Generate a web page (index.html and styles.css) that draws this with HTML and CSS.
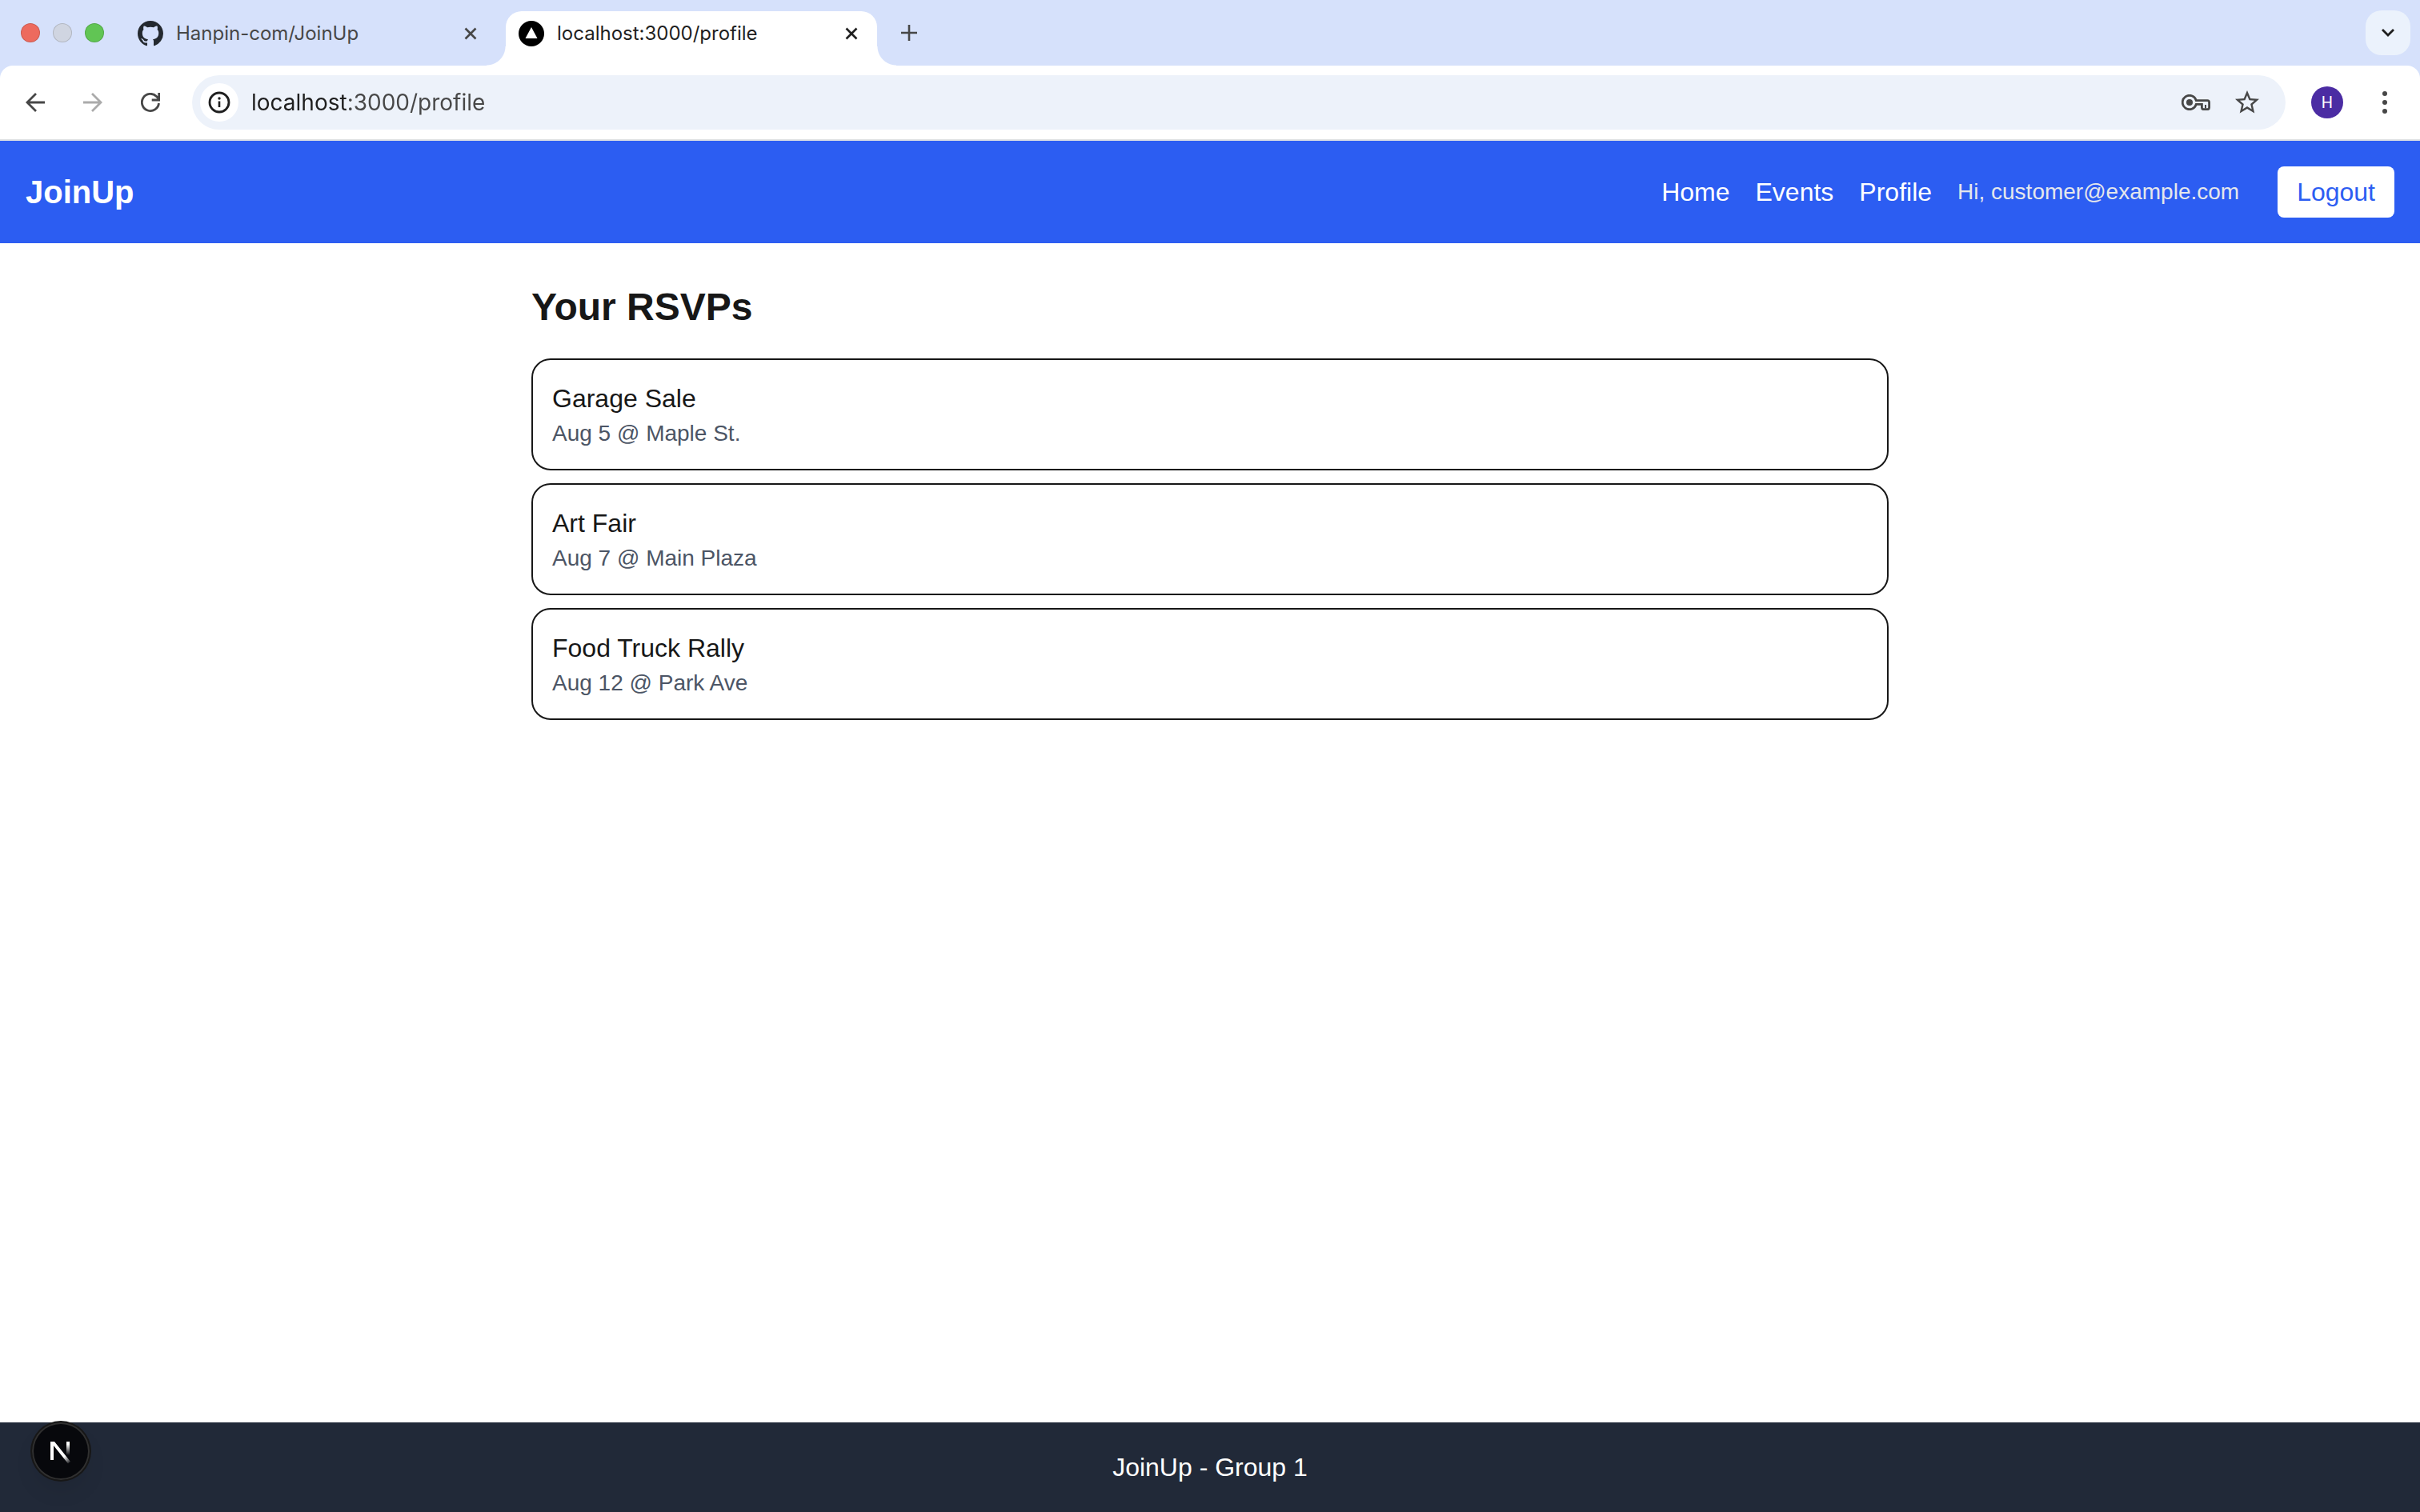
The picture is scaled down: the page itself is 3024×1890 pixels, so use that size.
FILE: index.html
```html
<!DOCTYPE html>
<html lang="en">
<head>
<meta charset="utf-8">
<meta name="viewport" content="width=device-width, initial-scale=1">
<title>JoinUp</title>
<link rel="stylesheet" href="styles.css">
</head>
<body>
<div class="browser">
  <div class="tab-strip">
    <div class="lights">
      <span class="light light-close"></span>
      <span class="light light-min"></span>
      <span class="light light-max"></span>
    </div>
    <div class="tab">
      <svg class="favicon" viewBox="0 0 16 16" aria-hidden="true"><path fill="#24292f" d="M8 0C3.58 0 0 3.58 0 8c0 3.54 2.29 6.53 5.47 7.59.4.07.55-.17.55-.38 0-.19-.01-.82-.01-1.49-2.01.37-2.53-.49-2.69-.94-.09-.23-.48-.94-.82-1.13-.28-.15-.68-.52-.01-.53.63-.01 1.08.58 1.23.82.72 1.21 1.87.87 2.33.66.07-.52.28-.87.51-1.07-1.78-.2-3.64-.89-3.64-3.95 0-.87.31-1.59.82-2.15-.08-.2-.36-1.02.08-2.12 0 0 .67-.21 2.2.82.64-.18 1.32-.27 2-.27s1.36.09 2 .27c1.53-1.04 2.2-.82 2.2-.82.44 1.1.16 1.92.08 2.12.51.56.82 1.27.82 2.15 0 3.07-1.87 3.75-3.65 3.95.29.25.54.73.54 1.48 0 1.07-.01 1.93-.01 2.2 0 .21.15.46.55.38A8.01 8.01 0 0 0 16 8c0-4.42-3.58-8-8-8z"/></svg>
      <span class="tab-title">Hanpin-com/JoinUp</span>
      <button class="tab-close" aria-label="Close tab"><svg viewBox="0 0 16 16" width="16" height="16"><path d="M1.500 1.500l13 13M14.500 1.500l-13 13" stroke="currentColor" stroke-width="2.600" fill="none"/></svg></button>
    </div>
    <div class="tab tab-active">
      <svg class="favicon" viewBox="0 0 32 32" aria-hidden="true"><circle cx="16" cy="16" r="16"/><path d="M16 8l7.500 14h-15z" fill="#fff"/></svg>
      <span class="tab-title">localhost:3000/profile</span>
      <button class="tab-close" aria-label="Close tab"><svg viewBox="0 0 16 16" width="16" height="16"><path d="M1.500 1.500l13 13M14.500 1.500l-13 13" stroke="currentColor" stroke-width="2.600" fill="none"/></svg></button>
    </div>
    <button class="icon-button" aria-label="New tab"><svg viewBox="0 0 20 20" width="20" height="20"><path d="M10 0v20M0 10h20" stroke="currentColor" stroke-width="2.600" fill="none"/></svg></button>
    <button class="icon-button tab-search" aria-label="Search tabs"><svg viewBox="0 0 16 10" width="16" height="10"><path d="M1 1l7 7 7-7" stroke="currentColor" stroke-width="2.800" fill="none"/></svg></button>
  </div>
  <div class="toolbar">
    <div class="history">
      <button class="icon-button" aria-label="Back"><svg viewBox="0 0 24 24" width="24" height="24"><path d="M24 12H2M13 1L2 12l11 11" stroke="currentColor" stroke-width="2.800" fill="none"/></svg></button>
      <button class="icon-button" aria-label="Forward" disabled><svg viewBox="0 0 24 24" width="24" height="24"><path d="M0 12h22M11 1l11 11-11 11" stroke="currentColor" stroke-width="2.800" fill="none"/></svg></button>
      <button class="icon-button" aria-label="Reload"><svg viewBox="0 0 24 24" width="24" height="24"><path d="M22.500 13A10.600 10.600 0 1 1 19.500 4.500L23 8M22.700 0v9h-9" stroke="currentColor" stroke-width="2.800" fill="none"/></svg></button>
    </div>
    <div class="omnibox">
      <button class="site-info" aria-label="View site information"><svg viewBox="0 0 28 28" width="28" height="28"><circle cx="14" cy="14" r="12" stroke="currentColor" stroke-width="2.800" fill="none"/><path d="M14 12.500v7.500" stroke="currentColor" stroke-width="2.600"/><circle cx="14" cy="9" r="1.700" fill="currentColor"/></svg></button>
      <input class="address" type="text" aria-label="Address" value="localhost:3000/profile">
      <div class="omnibox-actions">
        <button class="icon-button" aria-label="Passwords"><svg viewBox="0 0 36 20" width="36" height="20"><path d="M18.300 7.600A8.700 8.700 0 1 0 18.300 12.400H25.400V16.500q0 2.200 2.200 2.200h4.800q2.200 0 2.200-2.200V9.800q0-2.200-2.200-2.200z" fill="none" stroke="currentColor" stroke-width="2.800"/><circle cx="10" cy="10" r="4" fill="currentColor"/><path d="M30 13v4.500" stroke="currentColor" stroke-width="2"/></svg></button>
        <button class="icon-button" aria-label="Bookmark this tab"><svg viewBox="0 0 24 24" width="36" height="36"><path fill="currentColor" d="M22 9.240l-7.190-.62L12 2 9.190 8.630 2 9.240l5.460 4.730L5.820 21 12 17.270 18.180 21l-1.630-7.030L22 9.240zM12 15.400l-3.760 2.270 1-4.280-3.320-2.880 4.380-.38L12 6.100l1.710 4.040 4.380.38-3.320 2.880 1 4.280L12 15.400z"/></svg></button>
      </div>
    </div>
    <div class="account">
      <button class="avatar" aria-label="Profile H">H</button>
      <button class="icon-button" aria-label="Menu"><svg viewBox="0 0 6 28" width="6" height="28"><g fill="currentColor"><circle cx="3" cy="3" r="3"/><circle cx="3" cy="14" r="3"/><circle cx="3" cy="25" r="3"/></g></svg></button>
    </div>
  </div>
</div>

<div class="page">
  <header class="site-header">
    <a class="brand" href="#">JoinUp</a>
    <nav class="site-nav">
      <a href="#">Home</a>
      <a href="#">Events</a>
      <a href="#">Profile</a>
      <span class="greeting">Hi, customer@example.com</span>
      <button class="logout">Logout</button>
    </nav>
  </header>
  <main class="content">
    <h1>Your RSVPs</h1>
    <ul class="rsvps">
      <li class="rsvp"><h2>Garage Sale</h2><p>Aug 5 @ Maple St.</p></li>
      <li class="rsvp"><h2>Art Fair</h2><p>Aug 7 @ Main Plaza</p></li>
      <li class="rsvp"><h2>Food Truck Rally</h2><p>Aug 12 @ Park Ave</p></li>
    </ul>
  </main>
  <footer class="site-footer">JoinUp - Group 1</footer>
</div>

<button class="dev-badge" aria-label="Open Next.js Dev Tools">
  <svg viewBox="0 -4 26 34" width="26" height="34">
    <defs>
      <linearGradient id="diagonal" gradientUnits="userSpaceOnUse" x1="14" y1="16" x2="24" y2="29"><stop offset="0.300" stop-color="#fff"/><stop offset="1" stop-color="#fff" stop-opacity="0"/></linearGradient>
      <linearGradient id="stem" gradientUnits="userSpaceOnUse" x1="0" y1="1" x2="0" y2="18"><stop offset="0.200" stop-color="#fff"/><stop offset="1" stop-color="#fff" stop-opacity="0"/></linearGradient>
    </defs>
    <path d="M0 24V1h5l20 25-3 2.500L4 6v18z" fill="url(#diagonal)"/>
    <path d="M20 1h4v17h-4z" fill="url(#stem)"/>
  </svg>
</button>
</body>
</html>
```
FILE: styles.css
```css
* {
  box-sizing: border-box;
  margin: 0;
  padding: 0;
}

body {
  display: flex;
  flex-direction: column;
  min-height: 100vh;
  background: #fff;
  color: #171717;
  font: 32px/48px "Liberation Sans", Arial, Helvetica, sans-serif;
}

button {
  border: 0;
  background: none;
  color: inherit;
  font: inherit;
}

a {
  color: inherit;
  text-decoration: none;
}

svg {
  display: block;
  flex: none;
}

/* Browser window */

.browser {
  background: #d6e1fb;
  color: #474747;
  font: 24px/32px Inter, "Noto Sans", sans-serif;
}

.tab-strip {
  display: flex;
  align-items: center;
  gap: 12px;
  height: 82px;
  padding: 0 12px 0 26px;
}

.lights {
  display: flex;
  gap: 16px;
  margin-right: 14px;
}

.light {
  width: 24px;
  height: 24px;
  border: 1px solid rgb(0 0 0 / 14%);
  border-radius: 50%;
}

.light-close { background: #ed6a5e; }
.light-min { background: #d0d5e1; }
.light-max { background: #61c554; }

.tab {
  position: relative;
  display: flex;
  align-items: center;
  gap: 16px;
  width: 464px;
  height: 68px;
  align-self: flex-end;
  padding: 0 24px 12px 16px;
}

.tab-active {
  border-radius: 20px 20px 0 0;
  background: #fff;
  color: #1f1f1f;
}

.tab-active::before,
.tab-active::after {
  content: "";
  position: absolute;
  bottom: 0;
  width: 24px;
  height: 24px;
}

.tab-active::before {
  right: 100%;
  background: radial-gradient(circle at 0 0, transparent 23px, #fff 24px);
}

.tab-active::after {
  left: 100%;
  background: radial-gradient(circle at 100% 0, transparent 23px, #fff 24px);
}

.favicon {
  width: 32px;
  height: 32px;
}

.tab-title {
  flex: 1;
  white-space: nowrap;
}

.icon-button {
  display: grid;
  place-items: center;
  flex: none;
  width: 56px;
  height: 56px;
}

.icon-button:disabled {
  color: #ababab;
}

.tab-search {
  margin-left: auto;
  border-radius: 20px;
  background: #ebf2fc;
  color: #1f1f1f;
}

.toolbar {
  display: flex;
  align-items: center;
  gap: 24px;
  padding: 12px 16px;
  border-bottom: 2px solid #dfe1e3;
  border-radius: 16px 16px 0 0;
  background: #fff;
}

.history {
  display: flex;
  gap: 16px;
}

.omnibox {
  display: flex;
  flex: 1;
  align-items: center;
  gap: 16px;
  height: 68px;
  padding: 0 20px 0 10px;
  border-radius: 34px;
  background: #edf2fa;
}

.site-info {
  display: grid;
  place-items: center;
  width: 48px;
  height: 48px;
  border-radius: 50%;
  background: #fff;
  color: #1f1f1f;
}

/* The host is drawn darker than the rest of the address. */
.address {
  flex: 1;
  height: 48px;
  border: 0;
  outline: 0;
  background: linear-gradient(90deg, #1f1f1f 120px, #474747 120px);
  -webkit-background-clip: text;
  background-clip: text;
  color: transparent;
  font: 28px/48px Inter, "Noto Sans", sans-serif;
}

.omnibox-actions {
  display: flex;
  gap: 8px;
}

.account {
  display: flex;
  align-items: center;
  gap: 24px;
  padding-left: 8px;
}

.avatar {
  width: 40px;
  height: 40px;
  border-radius: 50%;
  background: #4b2ca3;
  color: #fff;
  font: 20px/40px Roboto, sans-serif;
}

/* JoinUp page */

.page {
  display: flex;
  flex: 1;
  flex-direction: column;
}

.site-header {
  display: flex;
  align-items: center;
  justify-content: space-between;
  padding: 32px;
  background: #2c5df2;
  color: #fff;
}

.brand {
  font-size: 40px;
  font-weight: 700;
}

.site-nav {
  display: flex;
  align-items: center;
  gap: 32px;
}

.greeting {
  color: #e5e7eb;
  font-size: 28px;
}

.logout {
  margin-left: 16px;
  padding: 8px 24px;
  border-radius: 8px;
  background: #fff;
  color: #2c5df2;
}

.content {
  flex: 1;
  width: 100%;
  max-width: 1792px;
  margin: 0 auto;
  padding: 48px;
}

h1 {
  margin-bottom: 32px;
  font-size: 48px;
  line-height: 64px;
}

.rsvps {
  display: grid;
  gap: 16px;
  list-style: none;
}

.rsvp {
  padding: 24px;
  border: 2px solid #171717;
  border-radius: 24px;
}

.rsvp h2 {
  font-size: 32px;
  font-weight: 400;
}

.rsvp p {
  color: #4c5565;
  font-size: 28px;
  line-height: 40px;
}

.site-footer {
  padding: 32px;
  background: #212938;
  color: #fff;
  text-align: center;
}

.dev-badge {
  position: fixed;
  bottom: 40px;
  left: 40px;
  display: grid;
  place-items: center;
  width: 72px;
  height: 72px;
  border-radius: 50%;
  background: #07080c;
  box-shadow: 0 0 0 2px #171717, inset 0 0 0 2px #303030, 0 16px 32px -8px rgb(0 0 0 / 12%);
}
```
